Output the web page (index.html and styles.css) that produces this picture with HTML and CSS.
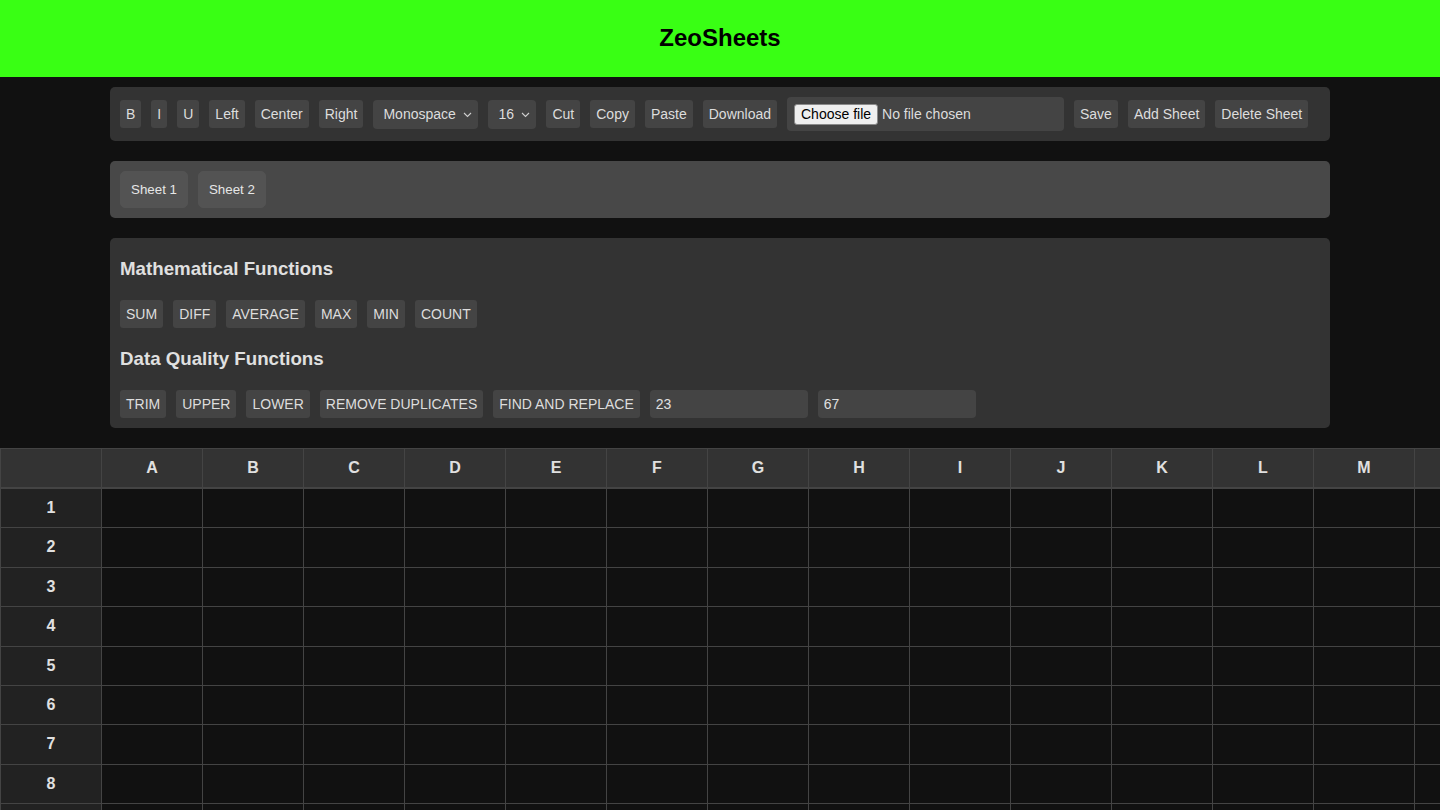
FILE: index.html
```html
<!DOCTYPE html>
<html lang="en">
<head>
<meta charset="utf-8">
<title>ZeoSheets</title>
<link rel="stylesheet" href="styles.css">
</head>
<body>
<header class="app-header">
  <h1 class="app-title">ZeoSheets</h1>
</header>

<main class="workspace">
  <div class="toolbar">
    <button class="tool-btn">B</button>
    <button class="tool-btn">I</button>
    <button class="tool-btn">U</button>
    <button class="tool-btn">Left</button>
    <button class="tool-btn">Center</button>
    <button class="tool-btn">Right</button>
    <span class="select-wrap">
      <select class="tool-select font-select">
        <option>Monospace</option>
        <option>Arial</option>
        <option>Times New Roman</option>
      </select>
      <svg class="chevron" width="9" height="6" viewBox="0 0 9 6"><polyline points="1,1 4.5,4.5 8,1" fill="none" stroke="#cfcfcf" stroke-width="1.1"/></svg>
    </span>
    <span class="select-wrap">
      <select class="tool-select size-select">
        <option>16</option>
        <option>12</option>
        <option>14</option>
        <option>18</option>
        <option>24</option>
      </select>
      <svg class="chevron" width="9" height="6" viewBox="0 0 9 6"><polyline points="1,1 4.5,4.5 8,1" fill="none" stroke="#cfcfcf" stroke-width="1.1"/></svg>
    </span>
    <button class="tool-btn">Cut</button>
    <button class="tool-btn">Copy</button>
    <button class="tool-btn">Paste</button>
    <button class="tool-btn">Download</button>
    <label class="file-picker">
      <input type="file" class="file-input">
      <span class="file-btn">Choose file</span>
      <span class="file-name">No file chosen</span>
    </label>
    <button class="tool-btn">Save</button>
    <button class="tool-btn">Add Sheet</button>
    <button class="tool-btn">Delete Sheet</button>
  </div>

  <div class="sheet-tabs">
    <button class="sheet-tab">Sheet 1</button>
    <button class="sheet-tab">Sheet 2</button>
  </div>

  <section class="functions">
    <div class="fn-group">
      <h3 class="fn-title">Mathematical Functions</h3>
      <div class="fn-row">
        <button class="tool-btn">SUM</button>
        <button class="tool-btn">DIFF</button>
        <button class="tool-btn">AVERAGE</button>
        <button class="tool-btn">MAX</button>
        <button class="tool-btn">MIN</button>
        <button class="tool-btn">COUNT</button>
      </div>
    </div>
    <div class="fn-group">
      <h3 class="fn-title">Data Quality Functions</h3>
      <div class="fn-row">
        <button class="tool-btn">TRIM</button>
        <button class="tool-btn">UPPER</button>
        <button class="tool-btn">LOWER</button>
        <button class="tool-btn">REMOVE DUPLICATES</button>
        <button class="tool-btn">FIND AND REPLACE</button>
        <input class="fn-input" type="text" value="23">
        <input class="fn-input" type="text" value="67">
      </div>
    </div>
  </section>
</main>

<div class="grid-wrap">
  <table class="grid" id="grid">
    <thead><tr id="grid-head"><th class="corner"></th></tr></thead>
    <tbody id="grid-body"></tbody>
  </table>
</div>

<script src="script.js"></script>
</body>
</html>
```

FILE: styles.css
```css
html {
  scrollbar-width: none;
}
html::-webkit-scrollbar {
  display: none;
}
body {
  margin: 0;
  background: #111111;
  color: #e0e0e0;
  font-family: "Liberation Sans", Arial, Helvetica, sans-serif;
}

.app-header {
  background: #39ff14;
  padding: 24px 0 26px;
  text-align: center;
}
.app-title {
  margin: 0;
  font-size: 24px;
  line-height: 27px;
  font-weight: 700;
  color: #000;
}

.workspace {
  display: flex;
  flex-direction: column;
  gap: 20px;
  padding: 10px 110px 20px;
}

.toolbar {
  display: flex;
  flex-wrap: wrap;
  align-items: center;
  gap: 10px;
  padding: 10px;
  background: #333333;
  border-radius: 5px;
}

.tool-btn {
  font-family: inherit;
  font-size: 14px;
  line-height: 16px;
  padding: 6px;
  border: none;
  border-radius: 3px;
  background: #444444;
  color: #dddddd;
  cursor: pointer;
}

.select-wrap {
  position: relative;
  display: inline-flex;
}
.tool-select {
  appearance: none;
  -webkit-appearance: none;
  font-family: inherit;
  font-size: 14px;
  line-height: 17px;
  height: 29px;
  padding: 6px 18px 6px 10px;
  border: none;
  border-radius: 4px;
  background: #444444;
  color: #dddddd;
}
.font-select {
  width: 105px;
}
.size-select {
  width: 48px;
}
.chevron {
  position: absolute;
  right: 6px;
  top: 12px;
  pointer-events: none;
}

.file-picker {
  display: flex;
  align-items: center;
  box-sizing: border-box;
  width: 277px;
  height: 34px;
  padding: 0 7px;
  background: #444444;
  border-radius: 4px;
  font-size: 14px;
  color: #dddddd;
  cursor: pointer;
}
.file-input {
  display: none;
}
.file-btn {
  background: #efefef;
  color: #000;
  border: 1px solid #8a8a8a;
  border-radius: 3px;
  padding: 1px 6px;
  line-height: 17px;
  margin-right: 4px;
}

.sheet-tabs {
  display: flex;
  gap: 10px;
  padding: 10px;
  background: #484848;
  border-radius: 5px;
}
.sheet-tab {
  font-family: inherit;
  font-size: 13.333px;
  padding: 10px;
  border: 1px solid #535353;
  border-radius: 5px;
  background: #535353;
  color: #e6e6e6;
  cursor: pointer;
}

.functions {
  padding: 20px 10px 10px;
  background: #333333;
  border-radius: 5px;
}
.fn-group + .fn-group {
  margin-top: 20.5px;
}
.fn-title {
  margin: 0 0 19.5px;
  font-size: 18.72px;
  font-weight: 700;
  color: #e0e0e0;
}
.fn-row {
  display: flex;
  flex-wrap: wrap;
  gap: 10px;
}
.fn-input {
  box-sizing: border-box;
  width: 158px;
  height: 28px;
  padding: 6px;
  border: none;
  border-radius: 4px;
  background: #444444;
  color: #e0e0e0;
  font-family: inherit;
  font-size: 14px;
}

.grid-wrap {
  width: 100%;
}
.grid {
  border-collapse: collapse;
  table-layout: fixed;
  font-size: 16px;
}
.grid th,
.grid td {
  width: 80px;
  min-width: 80px;
  padding: 10px;
  border: 1px solid #444444;
  line-height: 18.4px;
  text-align: center;
}
.grid thead th {
  background: #333333;
  color: #e0e0e0;
  font-weight: 700;
  border-bottom: 2px solid #444444;
}
.grid tbody th {
  background: #222222;
  color: #e0e0e0;
  font-weight: 700;
}
.grid td {
  background: #111111;
  color: #e0e0e0;
}
```

FILE: script.js
```js
(function () {
  var head = document.getElementById('grid-head');
  var body = document.getElementById('grid-body');
  var cols = 26;
  var rows = 50;
  for (var c = 0; c < cols; c++) {
    var th = document.createElement('th');
    th.textContent = String.fromCharCode(65 + c);
    head.appendChild(th);
  }
  for (var r = 1; r <= rows; r++) {
    var tr = document.createElement('tr');
    var rh = document.createElement('th');
    rh.textContent = r;
    tr.appendChild(rh);
    for (var k = 0; k < cols; k++) {
      var td = document.createElement('td');
      td.contentEditable = 'true';
      tr.appendChild(td);
    }
    body.appendChild(tr);
  }
})();
```
